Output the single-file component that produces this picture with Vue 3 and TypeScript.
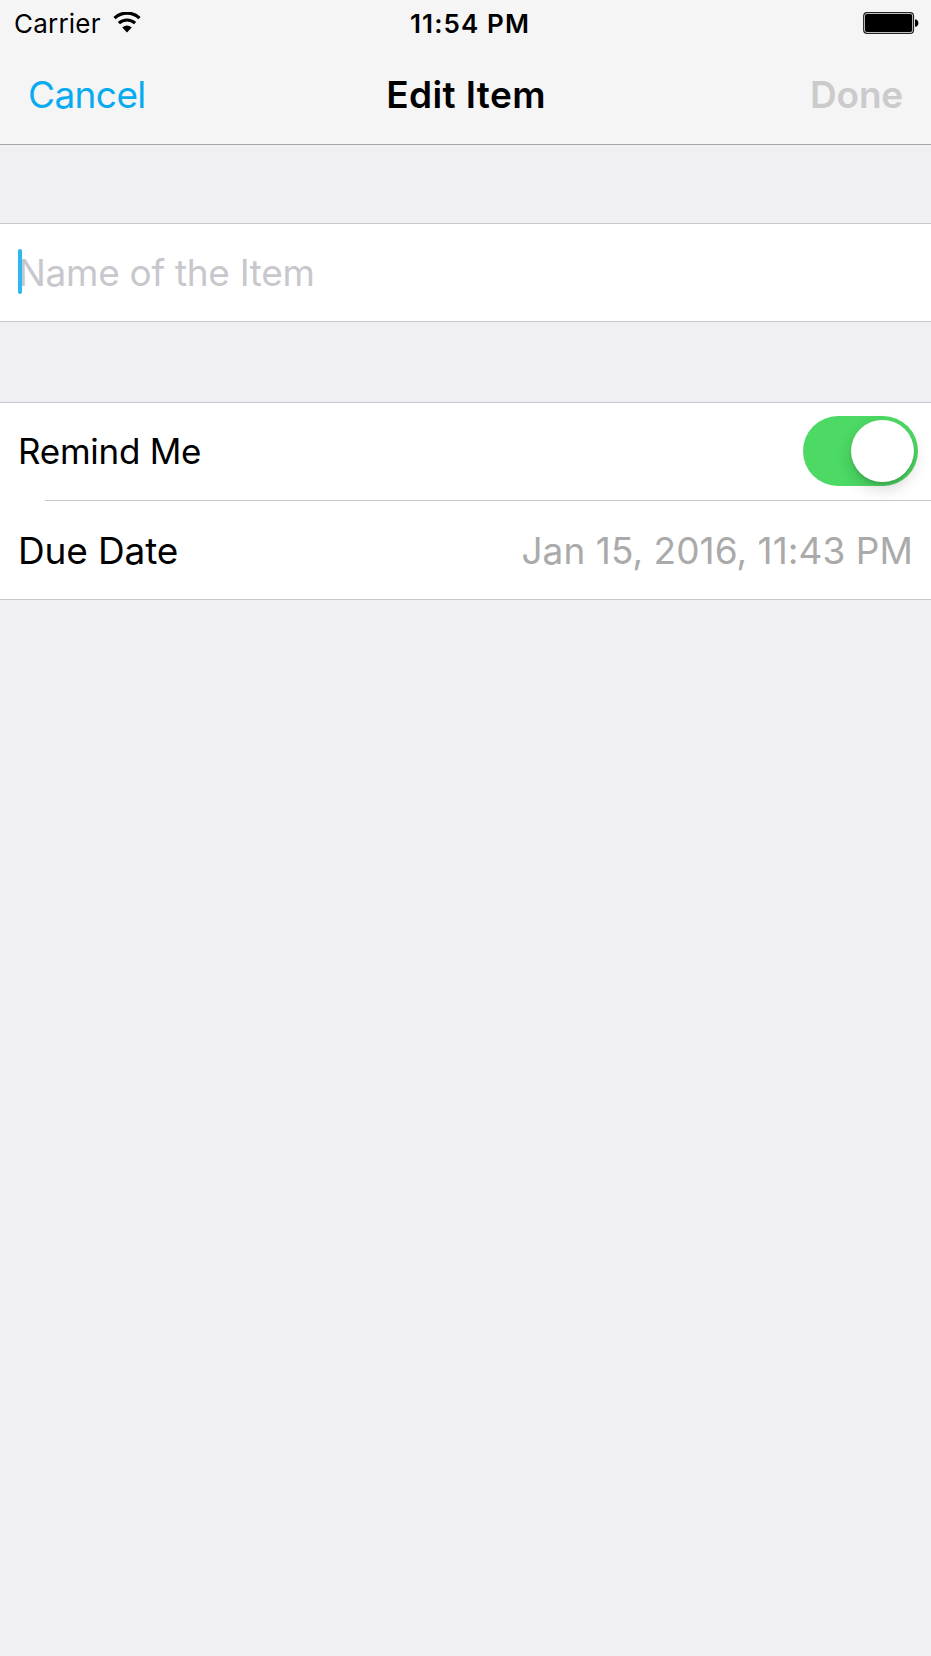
<script setup lang="ts">
import { ref } from 'vue'

const itemName = ref('')
const remind = ref(true)
const dueDate = ref('Jan 15, 2016, 11:43 PM')
</script>

<template>
  <div class="screen">
    <header class="top">
      <div class="status">
        <div class="carrier">
          <span>Carrier</span>
          <svg class="wifi" width="28" height="21" viewBox="0 0 28 21">
            <path d="M1.5 6.1A18.2 18.2 0 0 1 26.5 6.1" fill="none" stroke="#000" stroke-width="3.3" />
            <path d="M5.9 11.2A11.8 11.8 0 0 1 22.1 11.2" fill="none" stroke="#000" stroke-width="3.2" />
            <path d="M9.2 15.4Q14 11.6 18.8 15.4L14 20.4Z" fill="#000" />
          </svg>
        </div>
        <span class="time">11:54 PM</span>
        <svg class="battery" width="56" height="22" viewBox="0 0 56 22">
          <rect x="0.7" y="0.7" width="49.8" height="20.6" rx="3.4" fill="#f5f5f6" stroke="#222" stroke-width="1.2" />
          <rect x="2" y="2" width="47.2" height="18" rx="1.8" fill="#000" />
          <path d="M52 7.2C54.4 7.4 55.4 9 55.4 11S54.4 14.6 52 14.8Z" fill="#000" />
        </svg>
      </div>
      <nav class="nav">
        <a class="cancel">Cancel</a>
        <span class="title">Edit Item</span>
        <a class="done">Done</a>
      </nav>
    </header>

    <section class="group name-group">
      <div class="row">
        <div class="field">
          <input v-model="itemName" class="input" type="text" placeholder="Name of the Item" />
          <i class="caret"></i>
        </div>
      </div>
    </section>

    <section class="group">
      <div class="row remind">
        <span class="remind-label">Remind Me</span>
        <div class="switch" :class="{ on: remind }" @click="remind = !remind">
          <div class="knob"></div>
        </div>
      </div>
      <div class="divider"></div>
      <div class="row due">
        <span class="due-label">Due Date</span>
        <span class="date">{{ dueDate }}</span>
      </div>
    </section>
  </div>
</template>

<style>
body {
  margin: 0;
  background: #efeff4;
}
</style>

<style scoped>
.screen {
  box-sizing: border-box;
  min-height: 1656px;
  background: #efeff4;
  color: #000;
  font-family: Inter, "Liberation Sans", sans-serif;
  font-size: 37px;
  line-height: 44px;
  white-space: nowrap;
}
.top {
  background: #f5f5f6;
  border-bottom: 1px solid #a7a6ab;
}
.status {
  display: grid;
  grid-template-columns: 1fr auto 1fr;
  align-items: center;
  height: 47px;
  padding: 0 12px 0 14px;
  font-size: 26px;
  line-height: 32px;
}
.carrier {
  display: flex;
  align-items: center;
  gap: 12px;
  letter-spacing: 0.2px;
}
.wifi {
  margin-bottom: 2px;
}
.time {
  padding-left: 7px;
  font-weight: 600;
  letter-spacing: 1.1px;
}
.battery {
  justify-self: end;
  margin-bottom: 1px;
}
.nav {
  box-sizing: border-box;
  display: grid;
  grid-template-columns: 1fr auto 1fr;
  align-items: center;
  height: 97px;
  padding: 0 28px 2px;
}
.cancel {
  color: #08abf0;
  letter-spacing: -0.6px;
}
.title {
  padding-left: 1px;
  font-weight: 600;
  letter-spacing: 0.39px;
}
.done {
  justify-self: end;
  color: #cbcbcc;
  font-weight: 600;
  letter-spacing: -0.2px;
}
.group {
  margin-top: 80px;
  background: #fff;
  border-top: 1px solid #c8c7cc;
  border-bottom: 1px solid #c8c7cc;
}
.name-group {
  margin-top: 78px;
}
.row {
  box-sizing: border-box;
  display: flex;
  align-items: center;
  justify-content: space-between;
  height: 97px;
  padding: 0 18px;
}
.field {
  position: relative;
  flex: 1;
  display: flex;
}
.input {
  flex: 1;
  height: 46px;
  padding: 0;
  border: 0;
  outline: 0;
  background: transparent;
  font: inherit;
  letter-spacing: -0.3px;
}
.input::placeholder {
  color: #c8c7cd;
  opacity: 1;
}
.caret {
  position: absolute;
  left: 0;
  top: -1px;
  width: 4px;
  height: 45px;
  border-radius: 2px;
  background: #2fb8f0;
}
.remind {
  padding-right: 13px;
  padding-bottom: 1px;
}
.remind-label {
  font-size: 35px;
  letter-spacing: -0.25px;
}
.switch {
  box-sizing: border-box;
  display: flex;
  width: 115px;
  height: 70px;
  padding: 4px;
  border-radius: 35px;
  background: #e5e5ea;
}
.switch.on {
  justify-content: flex-end;
  background: #4cd964;
}
.knob {
  width: 63px;
  height: 62px;
  border-radius: 50%;
  background: #fff;
  box-shadow: 0 7px 16px rgba(0, 0, 0, 0.16), 0 3px 3px rgba(0, 0, 0, 0.1);
}
.divider {
  height: 1px;
  margin-left: 45px;
  background: #c8c7cc;
}
.due {
  height: 98px;
  padding-top: 2px;
}
.due-label {
  letter-spacing: -0.15px;
}
.date {
  color: #aaa;
  letter-spacing: 0.05px;
}
</style>
